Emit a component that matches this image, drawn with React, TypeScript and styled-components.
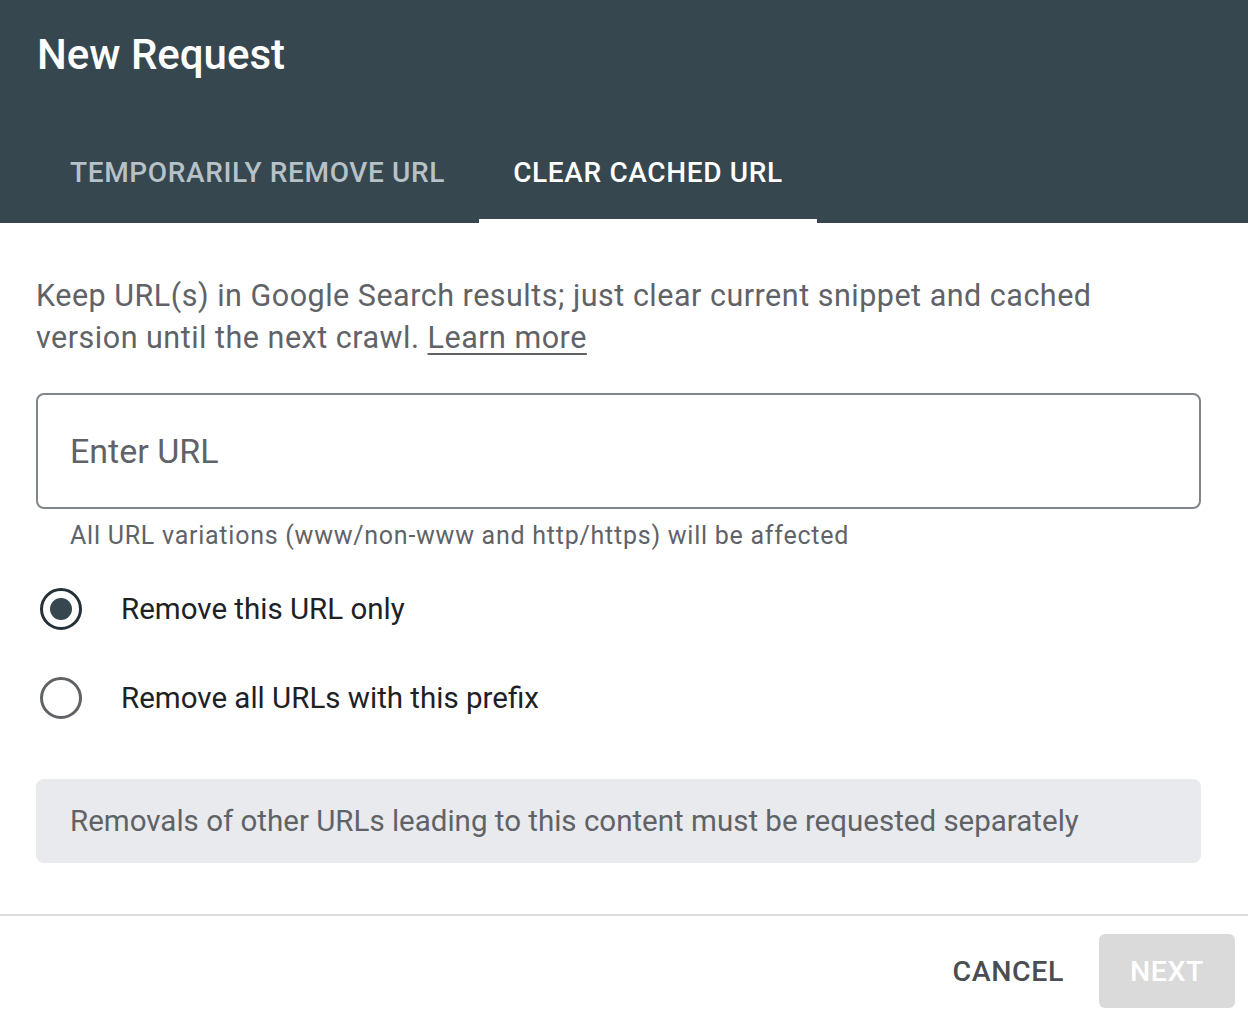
import React from "react";
import styled, { createGlobalStyle } from "styled-components";

const Global = createGlobalStyle`
  html, body { margin: 0; padding: 0; background: #ffffff; }
  body { font-family: Roboto, "Liberation Sans", Arial, sans-serif; -webkit-font-smoothing: antialiased; }
  * { box-sizing: border-box; }
`;

const Dialog = styled.div`
  width: 1248px;
  background: #ffffff;
`;

const Header = styled.header`
  background: #37474f;
`;

const Title = styled.h1`
  margin: 0;
  height: 122px;
  padding: 30px 37px 0;
  font-size: 42px;
  line-height: 50px;
  font-weight: 500;
  color: #ffffff;
  letter-spacing: 0;
`;

const TabBar = styled.nav`
  display: flex;
  height: 101px;
  padding-left: 36px;
`;

const Tab = styled.div<{ $active?: boolean }>`
  position: relative;
  display: flex;
  align-items: center;
  padding: 0 34px;
  font-size: 28px;
  font-weight: 500;
  letter-spacing: 0.65px;
  color: ${(p) => (p.$active ? "#ffffff" : "#b6c2c8")};
  &::after {
    content: "";
    position: absolute;
    left: 0;
    right: 0;
    bottom: 0;
    height: 4px;
    background: ${(p) => (p.$active ? "#ffffff" : "transparent")};
  }
`;

const Content = styled.section`
  padding: 52px 47px 0 36px;
`;

const Description = styled.p`
  margin: 0;
  font-size: 30.5px;
  line-height: 42px;
  letter-spacing: 0.5px;
  color: #5f6368;
`;

const LearnMore = styled.a`
  color: #5f6368;
  text-decoration: underline;
  text-underline-offset: 5px;
  text-decoration-thickness: 2px;
`;

const UrlInput = styled.input`
  display: block;
  width: 100%;
  height: 116px;
  margin-top: 34px;
  padding: 0 32px;
  border: 2px solid #80868b;
  border-radius: 8px;
  font-family: inherit;
  font-size: 34px;
  color: #3c4043;
  outline: none;
  &::placeholder { color: #5f6368; }
`;

const Helper = styled.div`
  margin-top: 12px;
  padding-left: 34px;
  font-size: 25px;
  line-height: 30px;
  letter-spacing: 0.75px;
  color: #5f6368;
`;

const RadioGroup = styled.div`
  margin-top: 28px;
  display: flex;
  flex-direction: column;
  gap: 29px;
`;

const RadioRow = styled.label`
  display: flex;
  align-items: center;
  height: 60px;
  padding-left: 4px;
  gap: 39px;
  font-size: 29.5px;
  color: #202124;
  cursor: pointer;
`;

const RadioCircle = styled.span<{ $checked?: boolean }>`
  width: 42px;
  height: 42px;
  border-radius: 50%;
  border: 3.5px solid ${(p) => (p.$checked ? "#263238" : "#5f6368")};
  display: flex;
  align-items: center;
  justify-content: center;
  flex-shrink: 0;
  &::after {
    content: "";
    width: 22px;
    height: 22px;
    border-radius: 50%;
    background: ${(p) => (p.$checked ? "#37474f" : "transparent")};
  }
`;

const InfoBox = styled.div`
  margin-top: 51px;
  height: 84px;
  display: flex;
  align-items: center;
  padding-left: 34px;
  background: #e8eaed;
  border-radius: 8px;
  font-size: 29.5px;
  color: #5f6368;
`;

const Footer = styled.footer`
  margin-top: 51px;
  border-top: 2px solid #dadce0;
  display: flex;
  justify-content: flex-end;
  gap: 4px;
  padding: 18px 13px 0 0;
`;

const Button = styled.button<{ $primary?: boolean }>`
  height: 74px;
  padding: 0 31px;
  border: none;
  border-radius: 6px;
  font-family: inherit;
  font-size: 28.5px;
  font-weight: 500;
  letter-spacing: 0.6px;
  background: ${(p) => (p.$primary ? "#dadada" : "transparent")};
  color: ${(p) => (p.$primary ? "#ffffff" : "#4a4d51")};
  cursor: pointer;
`;

export default function App() {
  return (
    <Dialog>
      <Global />
      <Header>
        <Title>New Request</Title>
        <TabBar>
          <Tab>TEMPORARILY REMOVE URL</Tab>
          <Tab $active>CLEAR CACHED URL</Tab>
        </TabBar>
      </Header>
      <Content>
        <Description>
          Keep URL(s) in Google Search results; just clear current snippet and cached
          version until the next crawl. <LearnMore href="#">Learn more</LearnMore>
        </Description>
        <UrlInput placeholder="Enter URL" />
        <Helper>All URL variations (www/non-www and http/https) will be affected</Helper>
        <RadioGroup>
          <RadioRow>
            <RadioCircle $checked />
            Remove this URL only
          </RadioRow>
          <RadioRow>
            <RadioCircle />
            Remove all URLs with this prefix
          </RadioRow>
        </RadioGroup>
        <InfoBox>Removals of other URLs leading to this content must be requested separately</InfoBox>
      </Content>
      <Footer>
        <Button>CANCEL</Button>
        <Button $primary disabled>NEXT</Button>
      </Footer>
    </Dialog>
  );
}
